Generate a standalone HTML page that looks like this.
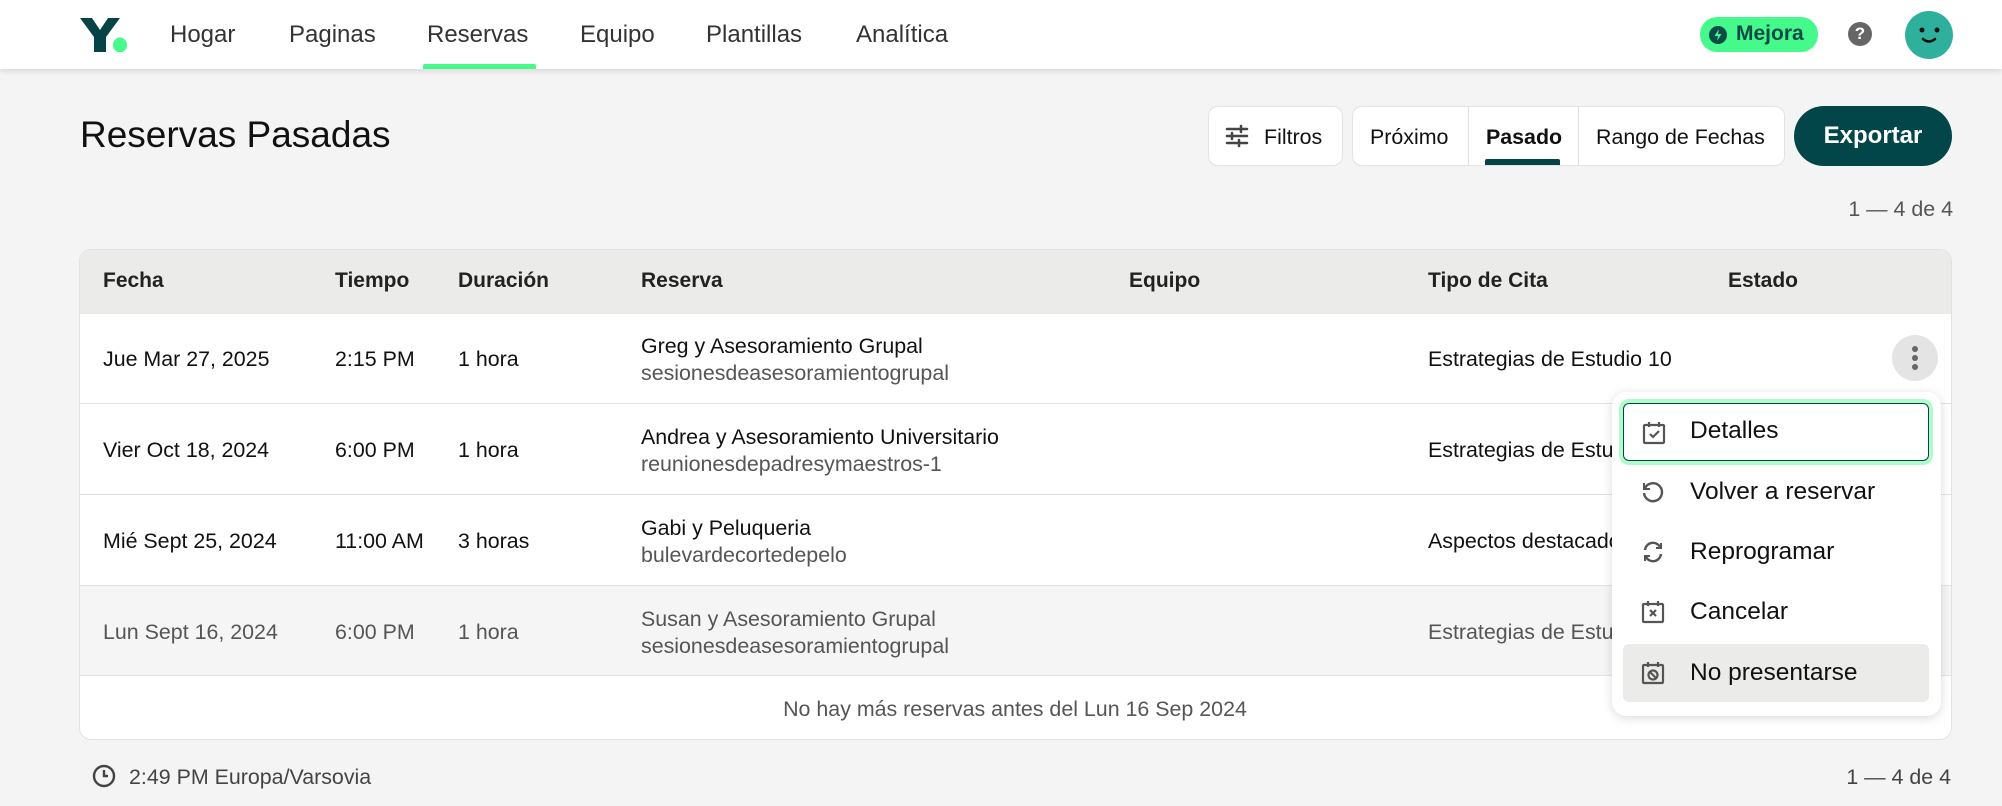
<!DOCTYPE html>
<html><head><meta charset="utf-8"><style>
*{box-sizing:border-box;margin:0;padding:0}
body{width:2002px;height:806px;background:#f4f4f4;font-family:"Liberation Sans",sans-serif;color:#111;position:relative;overflow:hidden}
.a{position:absolute;white-space:nowrap}
.hdr{position:absolute;left:0;top:0;width:2002px;height:69px;background:#fff;box-shadow:0 2px 6px rgba(0,0,0,.12)}
.nav{font-size:24px;color:#333;top:21px}
.t{font-size:21.4px;color:#111;margin-top:1px}
.g{color:#555}
.th{font-size:21px;font-weight:bold;color:#222;top:269px}
.row{position:absolute;left:80px;width:1871px;border-top:1px solid #e2e3e1}
.mi{position:absolute;left:1623px;width:306px;height:58px;border-radius:6px}
.mi span{position:absolute;left:67px;top:15px;font-size:24.5px;color:#111}
.mi svg{position:absolute;left:18px;top:17px}
</style></head><body>
<div class="hdr"></div>
<svg class="a" style="left:80px;top:18px" width="50" height="34" viewBox="0 0 50 34"><path d="M0 0h12l8 12 8-12h12L26 19v15H14V19z" fill="#054446"/><ellipse cx="40" cy="27" rx="7" ry="7.5" fill="#45f98a"/></svg>
<div class="a nav" style="left:170px">Hogar</div>
<div class="a nav" style="left:289px">Paginas</div>
<div class="a nav" style="left:427px">Reservas</div>
<div class="a nav" style="left:580px">Equipo</div>
<div class="a nav" style="left:706px">Plantillas</div>
<div class="a nav" style="left:856px">Analítica</div>
<div class="a" style="left:423px;top:64px;width:113px;height:5px;background:#45f98a;border-radius:2px 2px 0 0"></div>
<div class="a" style="left:1700px;top:17px;width:118px;height:35px;border-radius:17px;background:#45f98a"></div>
<svg class="a" style="left:1709px;top:26px" width="18" height="18" viewBox="0 0 18 18"><circle cx="9" cy="9" r="9" fill="#0a4a48"/><path d="M10 3L5.5 10H9l-1 5 4.5-7H9z" fill="#45f98a"/></svg>
<div class="a" style="left:1736px;top:22px;font-size:21px;font-weight:bold;color:#0a4a48">Mejora</div>
<div class="a" style="left:1848px;top:22px;width:24px;height:24px;border-radius:50%;background:#666;color:#fff;font-weight:bold;font-size:17px;text-align:center;line-height:24px">?</div>
<svg class="a" style="left:1904px;top:10px" width="50" height="50" viewBox="0 0 50 50"><circle cx="25" cy="25" r="24" fill="#2fb09c"/><circle cx="18" cy="20" r="2.5" fill="#111"/><circle cx="33" cy="20" r="2.5" fill="#111"/><path d="M19 29q6 5 12 0" stroke="#111" stroke-width="2.5" fill="none" stroke-linecap="round"/></svg>

<div class="a" style="left:80px;top:114px;font-size:37px;color:#111">Reservas Pasadas</div>
<div class="a" style="left:1208px;top:106px;width:135px;height:60px;background:#fff;border:1px solid #e2e2e2;border-radius:10px"></div>
<svg class="a" style="left:1225px;top:124px" width="24" height="24" viewBox="0 0 24 24" stroke="#444" stroke-width="2.5" stroke-linecap="round"><path d="M2 5h20M2 12h20M2 19h20"/><path d="M16 2v6M7 9v6M14 16v6"/></svg>
<div class="a t" style="left:1264px;top:124px">Filtros</div>
<div class="a" style="left:1352px;top:106px;width:433px;height:60px;background:#fff;border:1px solid #e2e2e2;border-radius:10px"></div>
<div class="a" style="left:1468px;top:107px;width:1px;height:58px;background:#e2e2e2"></div>
<div class="a" style="left:1578px;top:107px;width:1px;height:58px;background:#e2e2e2"></div>
<div class="a t" style="left:1370px;top:124px">Próximo</div>
<div class="a t" style="left:1486px;top:124px;font-weight:bold">Pasado</div>
<div class="a" style="left:1485px;top:159px;width:75px;height:6px;background:#054446;border-radius:2px 2px 0 0"></div>
<div class="a t" style="left:1596px;top:124px">Rango de Fechas</div>
<div class="a" style="left:1794px;top:106px;width:158px;height:60px;background:#02464a;border-radius:30px;color:#fff;font-size:24px;font-weight:bold;text-align:center;line-height:60px">Exportar</div>
<div class="a t g" style="right:49px;top:196px">1 — 4 de 4</div>

<div class="a" style="left:79px;top:249px;width:1873px;height:491px;background:#fff;border:1px solid #e2e3e1;border-radius:12px;overflow:hidden">
<div style="height:64px;background:#ebecea"></div>
<div style="position:absolute;left:0;top:335px;width:100%;height:91px;background:#f5f5f5"></div>
</div>
<div class="a th" style="left:103px">Fecha</div>
<div class="a th" style="left:335px">Tiempo</div>
<div class="a th" style="left:458px">Duración</div>
<div class="a th" style="left:641px">Reserva</div>
<div class="a th" style="left:1129px">Equipo</div>
<div class="a th" style="left:1428px">Tipo de Cita</div>
<div class="a th" style="left:1728px">Estado</div>
<div class="row" style="top:403px"></div><div class="row" style="top:494px"></div><div class="row" style="top:585px"></div><div class="row" style="top:675px"></div>

<div class="a t" style="left:103px;top:346px">Jue Mar 27, 2025</div>
<div class="a t" style="left:335px;top:346px">2:15 PM</div>
<div class="a t" style="left:458px;top:346px">1 hora</div>
<div class="a t" style="left:641px;top:333px">Greg y Asesoramiento Grupal</div>
<div class="a t g" style="left:641px;top:360px">sesionesdeasesoramientogrupal</div>
<div class="a t" style="left:1428px;top:346px">Estrategias de Estudio 10</div>

<div class="a t" style="left:103px;top:437px">Vier Oct 18, 2024</div>
<div class="a t" style="left:335px;top:437px">6:00 PM</div>
<div class="a t" style="left:458px;top:437px">1 hora</div>
<div class="a t" style="left:641px;top:424px">Andrea y Asesoramiento Universitario</div>
<div class="a t g" style="left:641px;top:451px">reunionesdepadresymaestros-1</div>
<div class="a t" style="left:1428px;top:437px">Estrategias de Estudio</div>

<div class="a t" style="left:103px;top:528px">Mié Sept 25, 2024</div>
<div class="a t" style="left:335px;top:528px">11:00 AM</div>
<div class="a t" style="left:458px;top:528px">3 horas</div>
<div class="a t" style="left:641px;top:515px">Gabi y Peluqueria</div>
<div class="a t g" style="left:641px;top:542px">bulevardecortedepelo</div>
<div class="a t" style="left:1428px;top:528px">Aspectos destacados</div>

<div class="a t g" style="left:103px;top:619px">Lun Sept 16, 2024</div>
<div class="a t g" style="left:335px;top:619px">6:00 PM</div>
<div class="a t g" style="left:458px;top:619px">1 hora</div>
<div class="a t g" style="left:641px;top:606px">Susan y Asesoramiento Grupal</div>
<div class="a t g" style="left:641px;top:633px">sesionesdeasesoramientogrupal</div>
<div class="a t g" style="left:1428px;top:619px">Estrategias de Estudio</div>

<div class="a t g" style="left:0;width:2030px;text-align:center;top:696px">No hay más reservas antes del Lun 16 Sep 2024</div>

<div class="a" style="left:1892px;top:335px;width:46px;height:46px;border-radius:50%;background:#e4e4e4"></div>
<svg class="a" style="left:1911px;top:345px" width="8" height="26"><circle cx="4" cy="4" r="3" fill="#666"/><circle cx="4" cy="13" r="3" fill="#666"/><circle cx="4" cy="22" r="3" fill="#666"/></svg>

<div class="a" style="left:1612px;top:392px;width:329px;height:324px;background:#fff;border-radius:14px;box-shadow:0 2px 10px rgba(0,0,0,.15)"></div>
<div class="mi" style="top:403px;border:1.5px solid #054446;box-shadow:0 0 0 4px #aefcc9">
<svg width="24" height="24" viewBox="0 0 24 24" fill="none" stroke="#555" stroke-width="2.2"><rect x="2" y="4" width="20" height="18" rx="1"/><path d="M7 1v5M17 1v5M8 13l3 3 6-6"/></svg><span style="top:13px;left:66px">Detalles</span></div>
<div class="mi" style="top:463px"><svg width="24" height="24" viewBox="0 0 24 24" fill="none" stroke="#555" stroke-width="2.4"><path d="M4 8a9 9 0 1 1-1 5"/><path d="M3 3v6h6" stroke-width="2"/></svg><span>Volver a reservar</span></div>
<div class="mi" style="top:523px"><svg width="24" height="24" viewBox="0 0 24 24" fill="none" stroke="#555" stroke-width="2.4"><path d="M4 10a8 8 0 0 1 15-3M20 14a8 8 0 0 1-15 3"/><path d="M20 3v5h-5M4 21v-5h5" stroke-width="2"/></svg><span>Reprogramar</span></div>
<div class="mi" style="top:583px"><svg width="24" height="24" viewBox="0 0 24 24" fill="none" stroke="#555" stroke-width="2.2"><rect x="2" y="4" width="20" height="18" rx="1"/><path d="M7 1v5M17 1v5M9 10l6 6M15 10l-6 6"/></svg><span>Cancelar</span></div>
<div class="mi" style="top:644px;background:#ebecea"><svg width="24" height="24" viewBox="0 0 24 24" fill="none" stroke="#555" stroke-width="2.2"><rect x="2" y="4" width="20" height="18" rx="1"/><path d="M7 1v5M17 1v5"/><circle cx="12" cy="14" r="4.5"/><path d="M9 11l6 6"/></svg><span>No presentarse</span></div>

<svg class="a" style="left:92px;top:764px" width="24" height="24" viewBox="0 0 24 24" fill="none" stroke="#444" stroke-width="2.4"><circle cx="12" cy="12" r="10"/><path d="M12 6v6h4"/></svg>
<div class="a t g" style="left:129px;top:764px;color:#444">2:49 PM Europa/Varsovia</div>
<div class="a t g" style="right:51px;top:764px;color:#444">1 — 4 de 4</div>
</body></html>
